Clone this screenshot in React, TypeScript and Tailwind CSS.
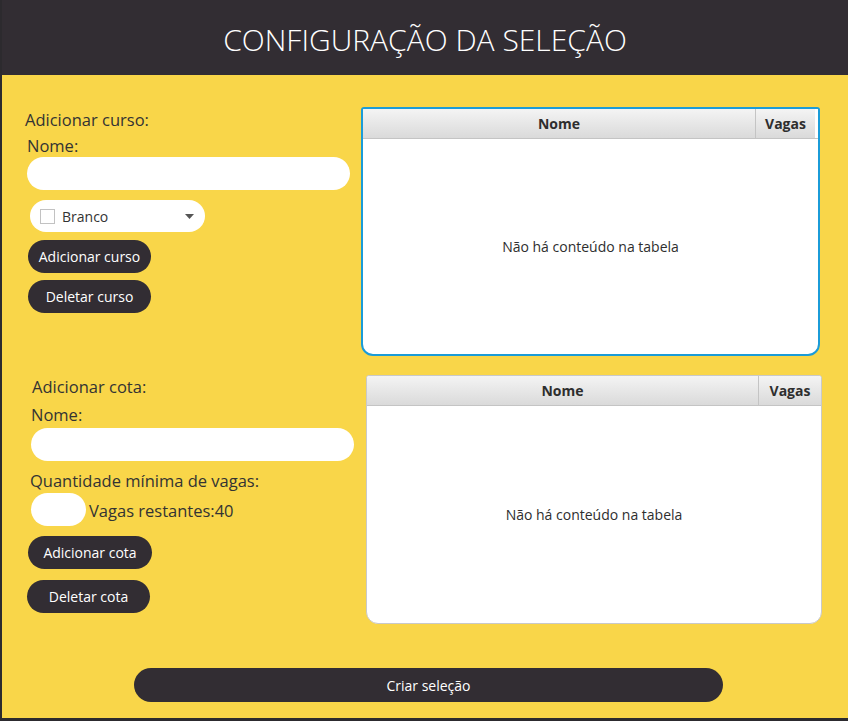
import { ReactNode } from "react";

const font = { fontFamily: '"Open Sans", "Noto Sans", sans-serif' };

function PillButton({ children, className = "" }: { children: ReactNode; className?: string }) {
    return (
        <button
            className={`flex h-[33px] items-center justify-center rounded-full bg-[#322d33] text-[14px] text-white ${className}`}
        >
            {children}
        </button>
    );
}

function EmptyTable({ focused, nomeWidth, vagasWidth, className = "" }: { focused?: boolean; nomeWidth: number; vagasWidth: number; className?: string }) {
    return (
        <div
            className={`flex h-[249px] flex-col overflow-hidden rounded-b-[12px] rounded-t-[3px] bg-white ${
                focused ? "border-2 border-[#1b9cd8]" : "border border-[#c9c9c9]"
            } ${className}`}
        >
            <div className="flex h-[30px] shrink-0 border-b border-[#c4c4c4] bg-gradient-to-b from-[#f4f4f4] to-[#dadada] text-[14px] font-bold text-[#2e2e2e]">
                <div className="flex items-center justify-center border-r border-[#c4c4c4]" style={{ width: nomeWidth }}>
                    Nome
                </div>
                <div className="flex items-center justify-center" style={{ width: vagasWidth }}>
                    Vagas
                </div>
                <div className="flex-1 bg-white" />
            </div>
            <div className="flex flex-1 items-center justify-center text-[14px] text-[#2e2e2e]">
                Não há conteúdo na tabela
            </div>
        </div>
    );
}

export default function App() {
    return (
        <div
            style={font}
            className="flex h-[721px] w-[848px] flex-col overflow-hidden border-b-[3px] border-l-[2px] border-[#2c2a2e] bg-[#f9d649] text-[#333]"
        >
            <header className="flex h-[75px] shrink-0 items-center justify-center bg-[#322d33]">
                <h1 className="mt-[3px] text-[30px] font-light text-white">CONFIGURAÇÃO DA SELEÇÃO</h1>
            </header>

            {/* curso */}
            <div className="flex">
                <div className="flex w-[359px] flex-col pt-[34px]">
                    <span className="ml-[23px] h-[22px] text-[16.5px] leading-[22px]">Adicionar curso:</span>
                    <span className="ml-[25px] mt-[4px] h-[22px] text-[16.5px] leading-[22px]">Nome:</span>
                    <div className="ml-[25px] h-[33px] w-[323px] rounded-full bg-white" />
                    <div className="ml-[28px] mt-[10px] flex h-[32px] w-[175px] items-center rounded-full bg-white pl-[10px] pr-[11px]">
                        <span className="h-[15px] w-[15px] border border-[#c2c2c2] bg-white" />
                        <span className="ml-[7px] flex-1 text-[14px] text-[#333]">Branco</span>
                        <svg width="9" height="5" viewBox="0 0 9 5">
                            <path d="M0 0h9L4.5 5z" fill="#555" />
                        </svg>
                    </div>
                    <PillButton className="ml-[26px] mt-[8px] w-[123px]">Adicionar curso</PillButton>
                    <PillButton className="ml-[26px] mt-[7px] w-[123px]">Deletar curso</PillButton>
                </div>
                <EmptyTable focused nomeWidth={393} vagasWidth={59} className="mt-[32px] w-[459px]" />
            </div>

            {/* cota */}
            <div className="flex">
                <div className="flex w-[364px] flex-col pt-[20px]">
                    <span className="ml-[30px] h-[22px] text-[16.5px] leading-[22px]">Adicionar cota:</span>
                    <span className="ml-[29px] mt-[6px] h-[22px] text-[16.5px] leading-[22px]">Nome:</span>
                    <div className="ml-[29px] mt-[2px] h-[33px] w-[323px] rounded-full bg-white" />
                    <span className="ml-[28px] mt-[9px] h-[22px] text-[16.5px] leading-[22px]">Quantidade mínima de vagas:</span>
                    <div className="ml-[29px] mt-[1px] flex items-center">
                        <div className="h-[33px] w-[55px] rounded-full bg-white" />
                        <span className="ml-[3px] mt-[4px] text-[16.5px]">Vagas restantes:40</span>
                    </div>
                    <PillButton className="ml-[26px] mt-[10px] w-[124px]">Adicionar cota</PillButton>
                    <PillButton className="ml-[25px] mt-[11px] w-[123px]">Deletar cota</PillButton>
                </div>
                <EmptyTable nomeWidth={392} vagasWidth={62} className="mt-[19px] w-[456px]" />
            </div>

            <div className="mt-[44px] flex justify-center pl-[7px]">
                <PillButton className="h-[34px] w-[589px]">Criar seleção</PillButton>
            </div>
        </div>
    );
}
